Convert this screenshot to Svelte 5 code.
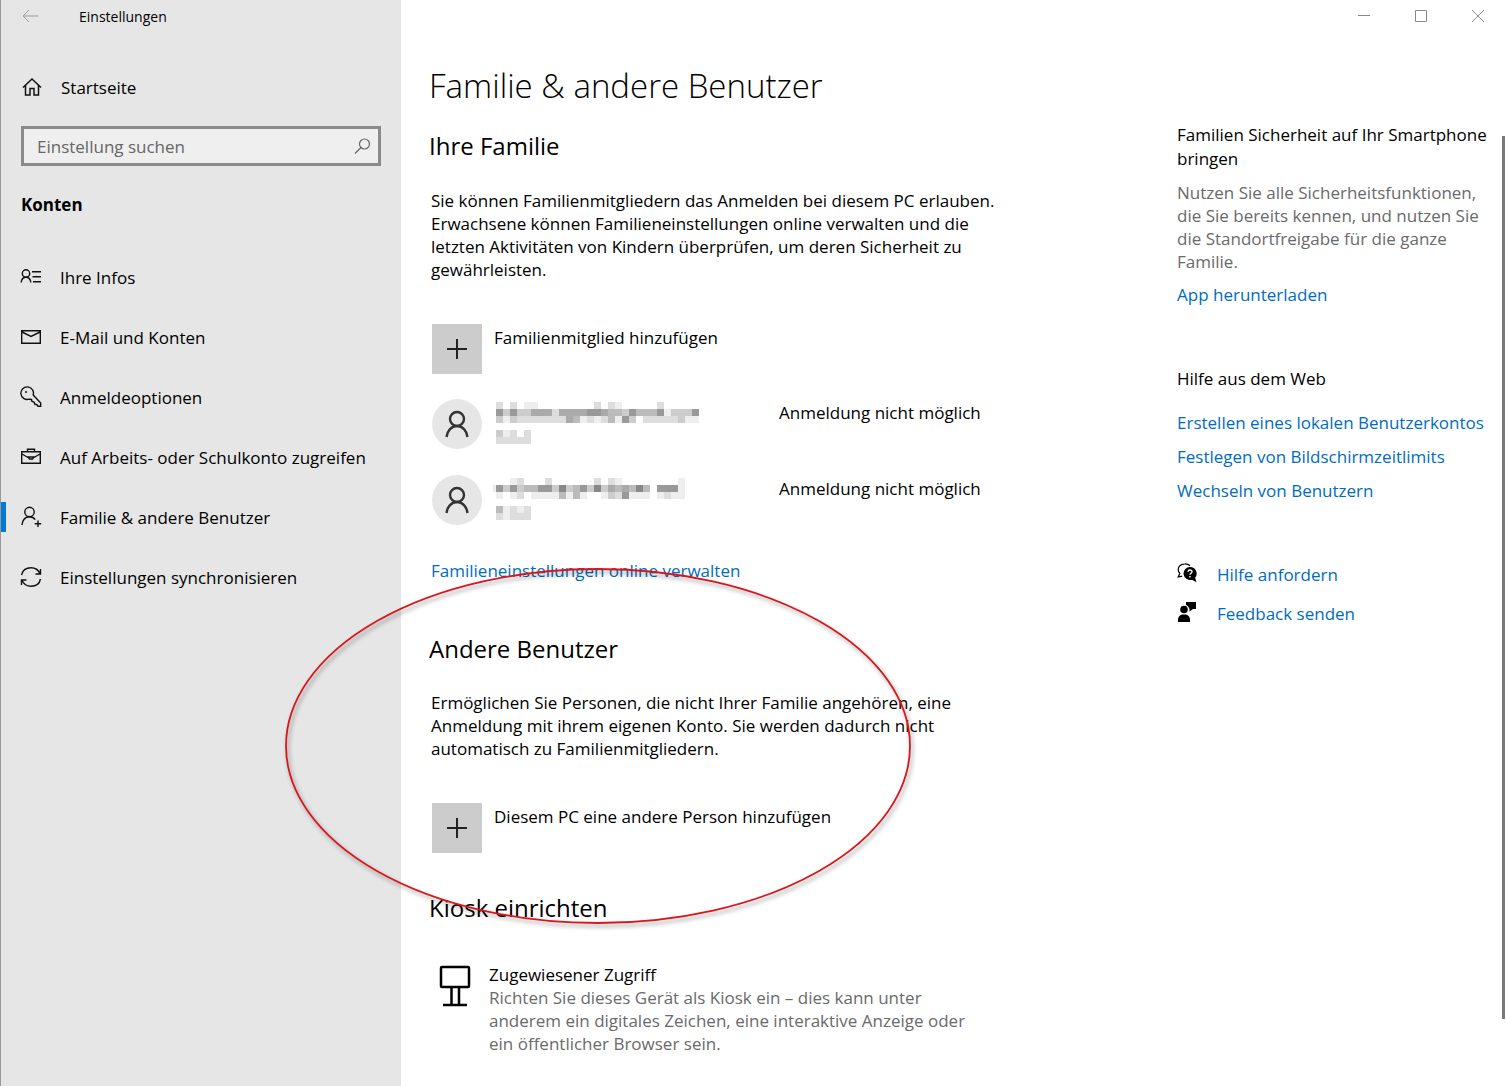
<script lang="ts">
  type Icon = 'info' | 'mail' | 'key' | 'case' | 'family' | 'sync';

  const nav: { label: string; icon: Icon }[] = [
    { label: 'Ihre Infos', icon: 'info' },
    { label: 'E-Mail und Konten', icon: 'mail' },
    { label: 'Anmeldeoptionen', icon: 'key' },
    { label: 'Auf Arbeits- oder Schulkonto zugreifen', icon: 'case' },
    { label: 'Familie & andere Benutzer', icon: 'family' },
    { label: 'Einstellungen synchronisieren', icon: 'sync' },
  ];

  // one hex digit per 7px block, '.' is empty; the first block is cut off at the left
  const members = [
    {
      name: [
        '.d.d.ee........dfde.....d......',
        'f9c9ccaaadaaaa99abbc9bbb9eccc9f',
        'fcecdddddddabededbe9cfdddddceef',
      ],
      role: ['fcedfd', 'fddddd'],
      status: 'Anmeldung nicht möglich',
    },
    {
      name: [
        '...ed...df.....dfde.......fe',
        'e9c9cbb99c8cb9c8cabab8bf999e',
        'fefedfeeeebebeffecd9eeefedee',
      ],
      role: ['fbeded', 'fdeddd'],
      status: 'Anmeldung nicht möglich',
    },
  ];

  const webLinks = [
    'Erstellen eines lokalen Benutzerkontos',
    'Festlegen von Bildschirmzeitlimits',
    'Wechseln von Benutzern',
  ];

  let active = $state('Familie & andere Benutzer');
  let query = $state('');
</script>

{#snippet mosaic(rows: string[])}
  <svg width="217" height={rows.length * 7} aria-hidden="true" shape-rendering="crispEdges">
    {#each rows as row, y}
      {#each row as c, x}
        {#if c !== '.'}
          <rect x={x * 7 - 4} y={y * 7} width="7" height="7" fill="#{c}{c}{c}" />
        {/if}
      {/each}
    {/each}
  </svg>
{/snippet}

{#snippet plus()}
  <span class="tile">
    <svg width="22" height="22" viewBox="0 0 22 22"><path d="M11 1v20M1 11h20" stroke="#222" stroke-width="2" /></svg>
  </span>
{/snippet}

<div class="window">
  <aside class="sidebar">
    <header class="caption">
      <button class="back" aria-label="Zurück">
        <svg width="16" height="14" viewBox="0 0 16 14"><path d="M7 1L1 7l6 6M1 7h15" stroke="#999" /></svg>
      </button>
      <span>Einstellungen</span>
    </header>

    <a class="home" href="#start">
      <svg width="20" height="20" viewBox="0 0 20 20">
        <path d="M1 10.500L10 2l9 8.500M3.500 8.500V18h4.500v-6.500h4V18h4.500V8.500" stroke="#111" stroke-width="1.500" />
      </svg>
      Startseite
    </a>

    <label class="search">
      <input type="text" placeholder="Einstellung suchen" aria-label="Einstellung suchen" bind:value={query} />
      <svg width="18" height="18" viewBox="0 0 18 18">
        <circle cx="11.500" cy="7" r="5" stroke="#666" stroke-width="1.200" />
        <path d="M8 10.500L2 16.500" stroke="#666" stroke-width="1.200" />
      </svg>
    </label>

    <h3>Konten</h3>

    <nav>
      {#each nav as item}
        <a href="#{item.icon}" class:active={active === item.label} onclick={() => (active = item.label)}>
          <svg width="22" height="22" viewBox="0 0 22 22" stroke="#111" stroke-width="1.400">
            {#if item.icon === 'info'}
              <circle cx="6" cy="7.500" r="3.700" />
              <path d="M1.200 16.500c.3-3.200 2-5.200 4.800-5.200s4.500 2 4.800 5.200M12 5.700h9M12.500 10.700h8.500M13 15.700h8" />
            {:else if item.icon === 'mail'}
              <path d="M1.700 4.700h18.600v12.600H1.700zM2 6l9 4.500L20 6" />
            {:else if item.icon === 'key'}
              <path d="M13.200 9A6.300 6.300 0 1 0 9 13.200l2.500.3.5 2 2 .5 1 2.300 2 .4 1 1.600h2.700V17z" />
              <circle class="dot" cx="6" cy="6" r="1" />
            {:else if item.icon === 'case'}
              <path d="M1.700 5.700h18.600v11.600H1.700zM7.500 5.500V3.200h7v2.300M2 8l6 3.500M14 11.500L20 8M8 11h6l-1.500 2h-3z" />
            {:else if item.icon === 'family'}
              <circle cx="9.500" cy="6" r="4.700" />
              <path d="M2 19c.6-5.200 3.500-8.300 7.500-8.300 2.500 0 4.500 1.200 5.700 3M18 14.500v6.500M14.700 17.700h6.500" />
            {:else}
              <path d="M1.500 9C2.500 4 6.500 1.700 11 1.700c4 0 7.500 2.300 9 6M20.500 3v5h-5M20.500 13c-1 5-5 7.300-9.500 7.300-4 0-7.500-2.300-9-6M1.500 19v-5h5" />
            {/if}
          </svg>
          {item.label}
        </a>
      {/each}
    </nav>
  </aside>

  <div class="page">
    <div class="controls">
      <button aria-label="Minimieren"><svg width="12" height="12" viewBox="0 0 12 12"><path d="M0 5.500h12" stroke="#888" /></svg></button>
      <button aria-label="Maximieren"><svg width="12" height="12" viewBox="0 0 12 12"><path d="M.5.5h11v11H.5z" stroke="#888" /></svg></button>
      <button aria-label="Schließen"><svg width="12" height="12" viewBox="0 0 12 12"><path d="M0 0l12 12M12 0L0 12" stroke="#888" /></svg></button>
    </div>

    <div class="columns">
      <main>
        <h1>Familie &amp; andere Benutzer</h1>

        <section>
          <h2>Ihre Familie</h2>
          <p>
            Sie können Familienmitgliedern das Anmelden bei diesem PC erlauben.<br />
            Erwachsene können Familieneinstellungen online verwalten und die<br />
            letzten Aktivitäten von Kindern überprüfen, um deren Sicherheit zu<br />
            gewährleisten.
          </p>

          <button class="add">{@render plus()}Familienmitglied hinzufügen</button>

          <ul>
            {#each members as m}
              <li>
                <span class="avatar">
                  <svg width="26" height="28" viewBox="0 0 26 28" stroke="#333" stroke-width="2.400">
                    <circle cx="13" cy="9" r="7" />
                    <path d="M2.500 27c.8-6.500 5-11 10.500-11s9.700 4.500 10.500 11" />
                  </svg>
                </span>
                <span class="who">
                  {@render mosaic(m.name)}
                  {@render mosaic(m.role)}
                </span>
                <span>{m.status}</span>
              </li>
            {/each}
          </ul>

          <a class="manage" href="#online">Familieneinstellungen online verwalten</a>
        </section>

        <section class="others">
          <h2>Andere Benutzer</h2>
          <p>
            Ermöglichen Sie Personen, die nicht Ihrer Familie angehören, eine<br />
            Anmeldung mit ihrem eigenen Konto. Sie werden dadurch nicht<br />
            automatisch zu Familienmitgliedern.
          </p>
          <button class="add">{@render plus()}Diesem PC eine andere Person hinzufügen</button>

          <svg class="marker" width="640" height="370" viewBox="0 0 640 370" aria-hidden="true">
            <ellipse cx="318" cy="182" rx="312" ry="177" stroke="#d8161c" stroke-width="1.800" />
          </svg>
        </section>

        <section class="kiosk-section">
          <h2>Kiosk einrichten</h2>
          <button class="kiosk">
            <svg width="32" height="42" viewBox="0 0 32 42" stroke="#000" stroke-width="2.500">
              <rect x="2" y="2" width="28" height="20" rx="1" />
              <path d="M12.500 22v18M20 22v18M4 40h24" />
            </svg>
            <span>
              Zugewiesener Zugriff
              <small>
                Richten Sie dieses Gerät als Kiosk ein – dies kann unter<br />
                anderem ein digitales Zeichen, eine interaktive Anzeige oder<br />
                ein öffentlicher Browser sein.
              </small>
            </span>
          </button>
        </section>
      </main>

      <aside class="related">
        <h4>Familien Sicherheit auf Ihr Smartphone<br />bringen</h4>
        <p>
          Nutzen Sie alle Sicherheitsfunktionen,<br />
          die Sie bereits kennen, und nutzen Sie<br />
          die Standortfreigabe für die ganze<br />
          Familie.
        </p>
        <a href="#app">App herunterladen</a>

        <div class="web">
          <h4>Hilfe aus dem Web</h4>
          {#each webLinks as link}
            <a href="#web">{link}</a>
          {/each}
        </div>

        <div class="support">
          <a href="#hilfe">
            <svg width="20" height="20" viewBox="0 0 20 20">
              <path d="M13 2.700A6.500 6 0 0 0 8 .8C4 .8 1.200 3.300 1.200 6.500c0 1.700.7 3 1.600 4L1.200 14l4-.9" stroke="#000" stroke-width="1.200" />
              <path d="M13 4a6.500 6.500 0 1 0 2 12.700l4.500 2.500-1.400-4.500A6.500 6.500 0 0 0 13 4z" fill="#000" />
              <path d="M11 8.700c.2-2.400 4.200-2.200 4 .1-.1 1.400-2 1.500-2 3M13 13v1.500" stroke="#fff" stroke-width="1.400" />
            </svg>
            Hilfe anfordern
          </a>
          <a href="#feedback">
            <svg width="20" height="20" viewBox="0 0 20 20">
              <circle cx="7" cy="7.500" r="3.800" fill="#000" />
              <path d="M1 20v-2c0-3.500 2-5.500 6-5.500s6 2 6 5.500v2zM9 0h10v7h-3L12.500 9.500V7C12 5 11 4 9 3z" fill="#000" />
            </svg>
            Feedback senden
          </a>
        </div>
      </aside>

      <div class="scroll"></div>
    </div>
  </div>
</div>

<style>
  :global(body) {
    margin: 0;
    background: #fff;
  }

  .window {
    display: grid;
    grid-template-columns: 401px 1fr;
    min-height: 100vh;
    font: 17px/23px 'Open Sans', 'Segoe UI', sans-serif;
    color: #000;
    white-space: nowrap;
  }

  svg {
    fill: none;
    flex-shrink: 0;
    display: block;
  }

  button {
    background: none;
    border: 0;
    padding: 0;
    font: inherit;
    color: inherit;
    text-align: left;
  }

  a {
    color: #006cbe;
    text-decoration: none;
  }

  h1, h2, h3, h4, p, ul {
    margin: 0;
    padding: 0;
  }

  .sidebar {
    box-sizing: border-box;
    background: #e6e6e6;
    border-left: 1px solid #999;
  }

  .caption {
    display: flex;
    align-items: center;
    height: 32px;
    padding-left: 21px;
    gap: 41px;
    font-size: 14px;
  }

  .home {
    display: flex;
    align-items: center;
    gap: 19px;
    height: 40px;
    margin-top: 35px;
    padding-left: 21px;
    color: #000;
  }

  .search {
    display: flex;
    align-items: center;
    box-sizing: border-box;
    height: 40px;
    margin: 19px 20px 0;
    padding: 0 7px 0 13px;
    background: #efefef;
    border: 3px solid #8a8a8a;
  }

  .search input {
    flex: 1;
    min-width: 0;
    padding: 0;
    border: 0;
    outline: 0;
    background: none;
    font: inherit;
  }

  .search input::placeholder {
    color: #666;
    opacity: 1;
  }

  h3 {
    margin: 27px 20px 31px;
    font-size: 17px;
    font-weight: 700;
  }

  nav a {
    display: flex;
    align-items: center;
    gap: 18px;
    height: 60px;
    padding-left: 19px;
    color: #000;
  }

  nav a.active {
    background: linear-gradient(#0078d7, #0078d7) left center / 5px 30px no-repeat;
  }

  .dot {
    fill: #111;
    stroke: none;
  }

  .page {
    display: flex;
    flex-direction: column;
  }

  .controls {
    display: flex;
    justify-content: flex-end;
    height: 32px;
  }

  .controls button {
    display: flex;
    align-items: center;
    justify-content: center;
    width: 57px;
  }

  .columns {
    display: flex;
    flex: 1;
    padding-left: 28px;
  }

  main {
    flex: 1;
    padding: 32px 0 28px;
  }

  h1 {
    font-size: 33px;
    line-height: 44px;
    font-weight: 300;
  }

  h2 {
    font-size: 24px;
    line-height: 32px;
    font-weight: 400;
  }

  section {
    margin-top: 22px;
  }

  section p {
    margin: 27px 0 43px 2px;
  }

  .add {
    display: flex;
    gap: 12px;
    margin-left: 3px;
    line-height: 28px;
  }

  .tile,
  .avatar {
    display: flex;
    align-items: center;
    justify-content: center;
    width: 50px;
    height: 50px;
    background: #ccc;
  }

  .avatar {
    background: #e6e6e6;
    border-radius: 50%;
  }

  ul {
    display: grid;
    gap: 26px;
    margin: 25px 0 34px 3px;
    list-style: none;
  }

  li {
    display: grid;
    grid-template-columns: 61px 286px auto;
    line-height: 28px;
  }

  .who {
    display: grid;
    align-content: start;
    gap: 7px;
    padding-top: 3px;
  }

  .manage {
    display: block;
    margin-left: 2px;
  }

  .others {
    position: relative;
    margin-top: 51px;
  }

  .others p {
    margin-top: 26px;
  }

  /* highlight ring, reaches over the sidebar */
  .marker {
    position: absolute;
    left: -149px;
    top: -69px;
    pointer-events: none;
    filter: drop-shadow(2px 3px 2px rgba(0, 0, 0, 0.4));
  }

  .kiosk-section {
    margin-top: 39px;
  }

  .kiosk {
    display: flex;
    gap: 18px;
    margin: 39px 0 0 10px;
  }

  .kiosk svg {
    margin-top: 2px;
  }

  small {
    display: block;
    font-size: 17px;
    color: #6a6a6a;
  }

  .related {
    width: 325px;
    padding-top: 91px;
  }

  .related a {
    display: block;
  }

  h4 {
    font-size: 17px;
    line-height: 24px;
    font-weight: 400;
  }

  .related p {
    margin: 10px 0;
    color: #6a6a6a;
  }

  .web {
    display: grid;
    gap: 11px;
    margin-top: 61px;
  }

  .web h4 {
    margin-bottom: 9px;
  }

  .support {
    display: grid;
    gap: 16px;
    margin-top: 61px;
  }

  .support a {
    display: flex;
    gap: 20px;
  }

  .scroll {
    width: 3px;
    margin: 104px 1px 67px 0;
    background: #7a7a7a;
  }
</style>
